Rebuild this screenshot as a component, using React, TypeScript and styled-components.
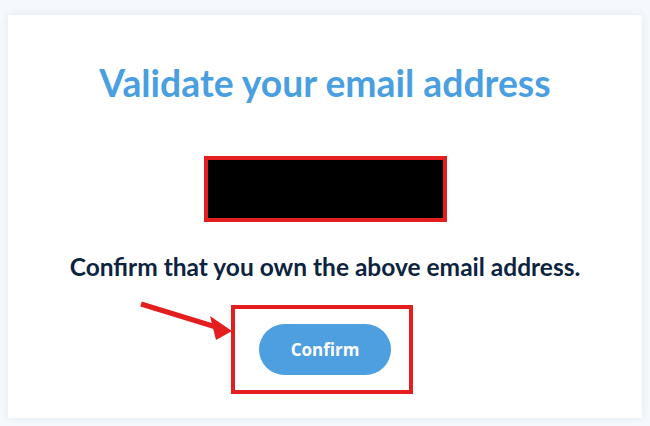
import React from "react";
import styled, { createGlobalStyle } from "styled-components";

const Global = createGlobalStyle`
  html, body { margin: 0; padding: 0; background: #f5f9fd; }
  body { width: 650px; height: 426px; overflow: hidden; }
  * { box-sizing: border-box; }
`;

const Page = styled.div`
  padding: 15px 8px 8px 8px;
`;

const Card = styled.div`
  background: #ffffff;
  height: 403px;
  box-shadow: 0 0 8px rgba(30, 70, 120, 0.09);
  display: flex;
  flex-direction: column;
  align-items: center;
  padding-top: 46px;
  font-family: Lato, "Open Sans", sans-serif;
`;

const Title = styled.h1`
  margin: 0;
  font-family: Lato, sans-serif;
  font-weight: 700;
  font-size: 37.3px;
  line-height: 1.2;
  color: #4a9fe1;
`;

const Redacted = styled.div`
  margin-top: 50px;
  width: 243px;
  height: 66px;
  background: #000;
  border: 4px solid #e41e1e;
`;

const Message = styled.p`
  margin: 30px 0 0 0;
  font-family: Lato, sans-serif;
  font-weight: 700;
  font-size: 24.5px;
  line-height: 1.2;
  color: #0c2440;
`;

const Highlight = styled.div`
  position: relative;
  margin-top: 24px;
  margin-left: -6px;
  border: 4px solid #e41e1e;
  padding: 15px 18px 15px 24px;
`;

const Button = styled.button`
  width: 132px;
  height: 51px;
  border: none;
  border-radius: 26px;
  background: #4e9fe0;
  color: #fff;
  font-family: "Open Sans", sans-serif;
  font-weight: 700;
  font-size: 17px;
  cursor: pointer;
  display: block;
`;

const Arrow = styled.svg`
  position: absolute;
  left: -101px;
  top: -16px;
  overflow: visible;
`;

export default function App() {
  return (
    <>
      <Global />
      <Page>
        <Card>
          <Title>Validate your email address</Title>
          <Redacted />
          <Message>Confirm that you own the above email address.</Message>
          <Highlight>
            <Arrow width="100" height="50" viewBox="0 0 100 50">
              <line x1="7" y1="11" x2="82" y2="34" stroke="#e41e1e" strokeWidth="5" />
              <polygon points="98,38 76,23 82,47" fill="#e41e1e" />
            </Arrow>
            <Button>Confirm</Button>
          </Highlight>
        </Card>
      </Page>
    </>
  );
}
